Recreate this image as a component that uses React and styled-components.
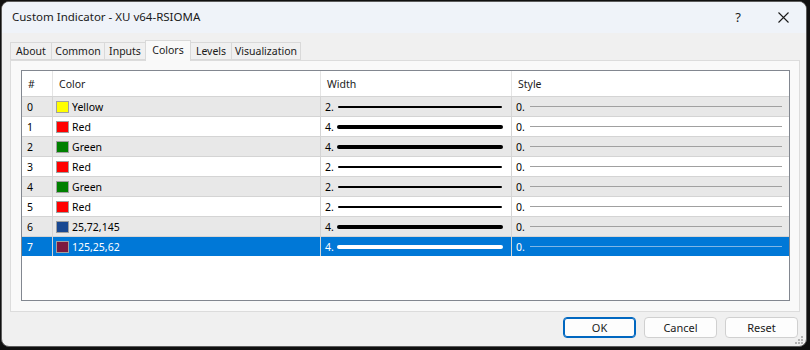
import React from "react";
import styled, { createGlobalStyle } from "styled-components";

const GlobalStyle = createGlobalStyle`
  body {
    margin: 0;
    background: #101010;
    font-family: "Noto Sans", "Open Sans", sans-serif;
    font-size: 10.5px;
  }
`;

const tabs = [
  { label: "About", w: 42 },
  { label: "Common", w: 54 },
  { label: "Inputs", w: 42 },
  { label: "Colors", w: 46 },
  { label: "Levels", w: 42 },
  { label: "Visualization", w: 70 },
];

const rows = [
  { id: 0, name: "Yellow", swatch: "#ffff00", width: 2 },
  { id: 1, name: "Red", swatch: "#ff0000", width: 4 },
  { id: 2, name: "Green", swatch: "#008000", width: 4 },
  { id: 3, name: "Red", swatch: "#ff0000", width: 2 },
  { id: 4, name: "Green", swatch: "#008000", width: 2 },
  { id: 5, name: "Red", swatch: "#ff0000", width: 2 },
  { id: 6, name: "25,72,145", swatch: "rgb(25,72,145)", width: 4 },
  { id: 7, name: "125,25,62", swatch: "rgb(125,25,62)", width: 4 },
];

const App = () => {
  const selected = 7;
  return (
    <>
      <GlobalStyle />
      <Window>
        <TitleBar>
          <Title>Custom Indicator - XU v64-RSIOMA</Title>
          <TitleButtons>
            <Help>?</Help>
            <svg width="11" height="11" viewBox="0 0 11 11">
              <path d="M0.5 0.5 L10.5 10.5 M10.5 0.5 L0.5 10.5" stroke="#1a1a1a" strokeWidth="1.1" />
            </svg>
          </TitleButtons>
        </TitleBar>
        <Body>
          <TabStrip>
            {tabs.map((t) => (
              <Tab key={t.label} $w={t.w} $active={t.label === "Colors"}>
                {t.label}
              </Tab>
            ))}
          </TabStrip>
          <Panel>
            <List>
              <HeaderRow>
                <HeadCell>#</HeadCell>
                <HeadCell>Color</HeadCell>
                <HeadCell>Width</HeadCell>
                <HeadCell>Style</HeadCell>
              </HeaderRow>
              {rows.map((r) => {
                const sel = r.id === selected;
                return (
                  <Row key={r.id} $odd={r.id % 2 === 1} $selected={sel}>
                    <Cell>{r.id}</Cell>
                    <Cell>
                      <Swatch $color={r.swatch} />
                      {r.name}
                    </Cell>
                    <Cell>
                      {r.width}.
                      <WidthLine $size={r.width} $selected={sel} />
                    </Cell>
                    <Cell>
                      0.
                      <StyleLine $selected={sel} />
                    </Cell>
                  </Row>
                );
              })}
            </List>
          </Panel>
          <Footer>
            <Button $primary>OK</Button>
            <Button>Cancel</Button>
            <Button>Reset</Button>
          </Footer>
          <Grip>
            <svg width="9" height="9" viewBox="0 0 9 9">
              {[
                [6, 0],
                [3, 3],
                [6, 3],
                [0, 6],
                [3, 6],
                [6, 6],
              ].map(([x, y]) => (
                <rect key={`${x}-${y}`} x={x} y={y} width="2" height="2" fill="#b4b4b4" />
              ))}
            </svg>
          </Grip>
        </Body>
      </Window>
    </>
  );
};

export default App;

// Styles
const Window = styled.div`
  margin: 1px 0 0 1px;
  width: 804px;
  height: 344px;
  border: 1px solid #5c5c5c;
  border-radius: 8px;
  overflow: hidden;
  background: #f0f0f0;
  display: flex;
  flex-direction: column;
  position: relative;
`;

const TitleBar = styled.div`
  height: 31px;
  background: #eff3f9;
  display: flex;
  align-items: center;
  justify-content: space-between;
  padding: 0 17px 0 10px;
`;

const Title = styled.div`
  font-size: 11.5px;
  color: #1a1a1a;
  margin-top: -2px;
`;

const TitleButtons = styled.div`
  display: flex;
  align-items: center;
  gap: 37px;
  margin-top: -1px;
`;

const Help = styled.span`
  font-size: 13px;
  color: #1a1a1a;
`;

const Body = styled.div`
  flex: 1;
  display: flex;
  flex-direction: column;
  padding: 7px 0 0 8px;
`;

const TabStrip = styled.div`
  display: flex;
  align-items: flex-end;
  height: 20px;
  position: relative;
  z-index: 1;
`;

const Tab = styled.div`
  width: ${(p) => p.$w}px;
  height: ${(p) => (p.$active ? "21px" : "18px")};
  margin-bottom: ${(p) => (p.$active ? "-1px" : "0")};
  padding-bottom: ${(p) => (p.$active ? "3px" : "0")};
  box-sizing: border-box;
  display: flex;
  align-items: center;
  justify-content: center;
  white-space: nowrap;
  background: ${(p) => (p.$active ? "#f9f9f9" : "#f0f0f0")};
  border: 1px solid #d9d9d9;
  border-bottom: ${(p) => (p.$active ? "none" : "1px solid #d9d9d9")};
  margin-left: -1px;
  color: #1a1a1a;
  &:first-child {
    margin-left: 0;
  }
`;

const Panel = styled.div`
  width: 790px;
  height: 252px;
  box-sizing: border-box;
  background: #f9f9f9;
  border: 1px solid #dcdcdc;
  padding: 9px 9px 10px 10px;
`;

const List = styled.div`
  height: 100%;
  box-sizing: border-box;
  border: 1px solid #828790;
  background: #fff;
`;

const HeaderRow = styled.div`
  display: grid;
  grid-template-columns: 30px 268px 191px 1fr;
  height: 25px;
  margin-right: 1px;
`;

const HeadCell = styled.div`
  display: flex;
  align-items: center;
  padding-left: 6px;
  color: #1a1a1a;
  & + & {
    border-left: 1px solid #e5e5e5;
  }
`;

const Row = styled.div`
  display: grid;
  grid-template-columns: 30px 268px 191px 1fr;
  height: 20px;
  box-sizing: border-box;
  border-top: 1px solid #d4d4d4;
  background: ${(p) => (p.$selected ? "#0078d7" : p.$odd ? "#ffffff" : "#e8e8e8")};
  color: ${(p) => (p.$selected ? "#ffffff" : "#000000")};
`;

const Cell = styled.div`
  display: flex;
  align-items: center;
  padding-left: 4px;
  padding-right: 8px;
  white-space: nowrap;
  & + & {
    border-left: 1px solid #d4d4d4;
  }
  &:first-child {
    padding-left: 5px;
  }
`;

const Swatch = styled.span`
  width: 11px;
  height: 10px;
  background: ${(p) => p.$color};
  border: 1px solid #a0a0a0;
  margin: 0 3px 0 -1px;
  flex-shrink: 0;
`;

const WidthLine = styled.span`
  flex: 1;
  height: ${(p) => p.$size}px;
  border-radius: ${(p) => p.$size / 2}px;
  background: ${(p) => (p.$selected ? "#ffffff" : "#000000")};
  margin-left: ${(p) => (p.$size > 2 ? "3px" : "4px")};
  margin-right: ${(p) => (p.$size > 2 ? "0px" : "1px")};
`;

const StyleLine = styled.span`
  flex: 1;
  height: 1px;
  background: ${(p) => (p.$selected ? "#7fb6e6" : "#a0a0a0")};
  margin-left: 5px;
  margin-right: -1px;
`;

const Footer = styled.div`
  display: flex;
  justify-content: flex-end;
  gap: 8px;
  padding: 5px 8px 0 0;
`;

const Button = styled.div`
  width: 73px;
  height: 21px;
  box-sizing: border-box;
  border-radius: 4px;
  background: #fdfdfd;
  border: 1px solid ${(p) => (p.$primary ? "#0067c0" : "#d0d0d0")};
  box-shadow: ${(p) => (p.$primary ? "inset 0 0 0 1px #0067c0" : "none")};
  display: flex;
  align-items: center;
  justify-content: center;
  font-size: 11px;
  color: #1a1a1a;
`;

const Grip = styled.div`
  position: absolute;
  right: 2px;
  bottom: 1px;
  line-height: 0;
`;
